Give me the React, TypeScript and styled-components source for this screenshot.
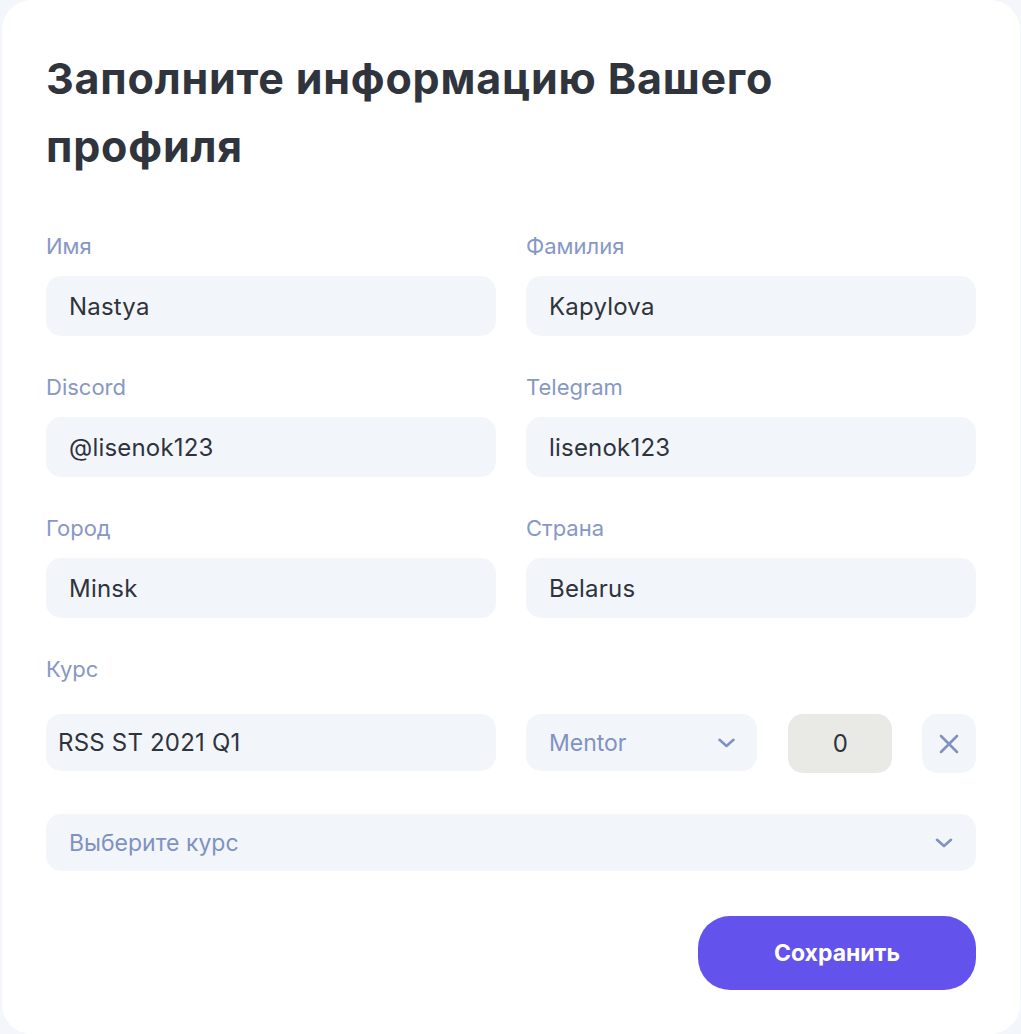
import React from "react";
import styled, { createGlobalStyle } from "styled-components";

const Global = createGlobalStyle`
  html, body { margin: 0; padding: 0; background: #f3f7fb; }
  body { font-family: Inter, "Noto Sans", sans-serif; }
  * { box-sizing: border-box; }
`;

const Card = styled.div`
  margin: 0 1px 0 2px;
  min-height: 1034px;
  background: #ffffff;
  border-radius: 30px;
  padding: 44px 45px 0 44px;
`;

const Title = styled.h1`
  margin: 0;
  font-family: Inter, "Liberation Sans", sans-serif;
  font-weight: 700;
  font-size: 43px;
  line-height: 68px;
  color: #30343d;
  letter-spacing: 0.8px;
  max-width: 800px;
`;

const Grid = styled.div`
  margin-top: 54px;
  display: grid;
  grid-template-columns: 450px 450px;
  column-gap: 30px;
  row-gap: 39px;
`;

const Field = styled.div`
  display: flex;
  flex-direction: column;
  gap: 18px;
`;

const Label = styled.label<{ $gap?: number }>`
  font-size: 22px;
  line-height: 24px;
  color: #8798c4;
  font-weight: 400;
  margin-bottom: ${(p) => (p.$gap ? p.$gap : 0)}px;
`;

const Input = styled.div<{ $pad?: number; $h?: number }>`
  height: ${(p) => p.$h ?? 60}px;
  background: #f2f6fb;
  border-radius: 15px;
  display: flex;
  align-items: center;
  padding-left: ${(p) => p.$pad ?? 23}px;
  font-size: 24px;
  color: #2f333c;
  letter-spacing: 0.2px;
`;

const CourseRow = styled.div`
  display: flex;
  align-items: flex-start;
`;

const Select = styled.div<{ $w?: number }>`
  width: ${(p) => (p.$w ? `${p.$w}px` : "100%")};
  height: 57px;
  background: #f2f6fb;
  border-radius: 15px;
  display: flex;
  align-items: center;
  justify-content: space-between;
  padding: 0 22px 0 23px;
  font-size: 23px;
  color: #7f92c1;
`;

const Count = styled.div`
  margin-left: 31px;
  width: 104px;
  height: 59px;
  background: #e9eae5;
  border-radius: 15px;
  display: flex;
  align-items: center;
  justify-content: center;
  font-size: 24px;
  color: #2f333c;
`;

const IconButton = styled.button`
  margin-left: 30px;
  width: 54px;
  height: 59px;
  border: none;
  background: #f2f6fb;
  border-radius: 15px;
  display: flex;
  align-items: center;
  justify-content: center;
  padding: 0;
`;

const Wide = styled.div`
  margin-top: 41px;
  width: 930px;
`;

const Footer = styled.div`
  display: flex;
  justify-content: flex-end;
  width: 930px;
  margin-top: 45px;
`;

const Save = styled.button`
  width: 278px;
  height: 74px;
  border: none;
  border-radius: 32px;
  background: #6352ec;
  color: #ffffff;
  font-family: Inter, "Liberation Sans", sans-serif;
  font-weight: 700;
  font-size: 23px;
`;

const Chevron = ({ w = 17 }: { w?: number }) => (
  <svg width={w} height={10} viewBox="0 0 17 10" fill="none">
    <path d="M1.5 1.8 L8.5 8 L15.5 1.8" stroke="#7f92c1" strokeWidth="2.6" strokeLinecap="round" strokeLinejoin="round" />
  </svg>
);

const Cross = () => (
  <svg width="20" height="20" viewBox="0 0 20 20" fill="none">
    <path d="M2 2 L18 18 M18 2 L2 18" stroke="#7f92c1" strokeWidth="2.6" strokeLinecap="round" />
  </svg>
);

const fields: [string, string][] = [
  ["Имя", "Nastya"],
  ["Фамилия", "Kapylova"],
  ["Discord", "@lisenok123"],
  ["Telegram", "lisenok123"],
  ["Город", "Minsk"],
  ["Страна", "Belarus"],
];

export default function App() {
  return (
    <>
      <Global />
      <Card>
        <Title>Заполните информацию Вашего профиля</Title>
        <Grid>
          {fields.map(([label, value]) => (
            <Field key={label}>
              <Label>{label}</Label>
              <Input>{value}</Input>
            </Field>
          ))}
          <Field>
            <Label $gap={15}>Курс</Label>
            <Input $pad={12} $h={57}>RSS ST 2021 Q1</Input>
          </Field>
          <Field>
            <Label $gap={15}>&nbsp;</Label>
            <CourseRow>
              <Select $w={232}>
                <span>Mentor</span>
                <Chevron />
              </Select>
              <Count>0</Count>
              <IconButton aria-label="remove">
                <Cross />
              </IconButton>
            </CourseRow>
          </Field>
        </Grid>
        <Wide>
          <Select>
            <span>Выберите курс</span>
            <Chevron w={20} />
          </Select>
        </Wide>
        <Footer>
          <Save>Сохранить</Save>
        </Footer>
      </Card>
    </>
  );
}
